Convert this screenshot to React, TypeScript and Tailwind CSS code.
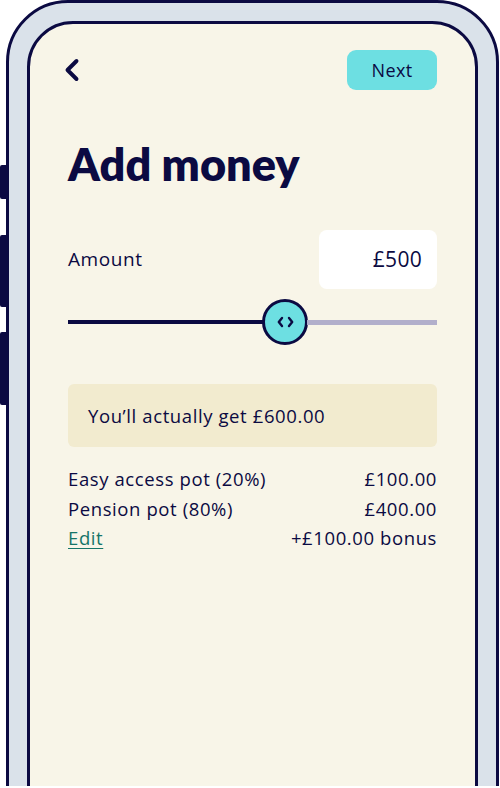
import { ChevronLeft } from 'lucide-react'

const navy = '#0b0a42'

function SideButtons() {
  return (
    <>
      <div className="absolute left-0 top-[165px] h-[34px] w-[8px] rounded-l-[2px] bg-[#0b0a42]" />
      <div className="absolute left-0 top-[235px] h-[72px] w-[8px] rounded-l-[2px] bg-[#0b0a42]" />
      <div className="absolute left-0 top-[332px] h-[73px] w-[8px] rounded-l-[2px] bg-[#0b0a42]" />
    </>
  )
}

function Slider() {
  return (
    <div className="mt-[10px] flex h-[46px] items-center">
      <div className="h-[4px] w-[195px] bg-[#0b0a42]" />
      <div className="flex size-[46px] shrink-0 items-center justify-center rounded-full border-[3px] border-[#0b0a42] bg-[#6ddfe2] -mx-[1px]">
        <svg width="17" height="12" viewBox="0 0 17 12" fill="none" stroke={navy} strokeWidth="2.4" strokeLinecap="round" strokeLinejoin="round">
          <path d="M5 2 1.8 6 5 10" />
          <path d="M12 2 15.2 6 12 10" />
        </svg>
      </div>
      <div className="h-[5px] flex-1 bg-[#b2afcb]" />
    </div>
  )
}

export default function App() {
  return (
    <div className="relative h-[788px] w-[500px] overflow-hidden bg-white" style={{ fontFamily: '"Open Sans", "Noto Sans", sans-serif' }}>
      <SideButtons />
      <div className="h-[786px] overflow-hidden pl-[6px] pr-[1px]">
        <div className="h-[830px] rounded-t-[62px] border-[3px] border-[#0b0a42] bg-[#dae2ea] px-[18px] pt-[18px]">
          <div className="h-[800px] rounded-t-[46px] border-[3px] border-[#0b0a42] bg-[#f8f5e8] px-[38px] pt-[26px] text-[#0b0a42]">
            <div className="flex items-center justify-between">
              <ChevronLeft className="-ml-[14px] size-[36px]" strokeWidth={2.6} />
              <button className="h-[40px] w-[90px] rounded-[9px] bg-[#6ddfe2] text-[18px] font-medium tracking-[0.4px] text-[#0b0a42]">Next</button>
            </div>

            <h1 className="mt-[52px] text-[45px] font-extrabold leading-none tracking-[0px]" style={{ fontFamily: 'Lato, sans-serif' }}>
              Add money
            </h1>

            <div className="mt-[43px] flex items-center justify-between">
              <span className="text-[19px] font-medium tracking-[0.6px]">Amount</span>
              <div className="flex h-[59px] w-[118px] items-center justify-end rounded-[8px] bg-white pr-[15px] text-[21px] font-medium tracking-[0.3px]">£500</div>
            </div>

            <Slider />

            <div className="mt-[39px] flex h-[63px] items-center rounded-[6px] bg-[#f2ebcf] px-[20px] text-[18.5px] font-medium tracking-[0.6px]">
              You’ll actually get £600.00
            </div>

            <div className="mt-[17px] flex flex-col text-[18.5px] font-medium leading-[29.5px] tracking-[0.6px]">
              <div className="flex justify-between">
                <span>Easy access pot (20%)</span>
                <span>£100.00</span>
              </div>
              <div className="flex justify-between">
                <span>Pension pot (80%)</span>
                <span>£400.00</span>
              </div>
              <div className="flex justify-between">
                <a className="text-[#167568] underline underline-offset-[3px]">Edit</a>
                <span>+£100.00 bonus</span>
              </div>
            </div>
          </div>
        </div>
      </div>
    </div>
  )
}
